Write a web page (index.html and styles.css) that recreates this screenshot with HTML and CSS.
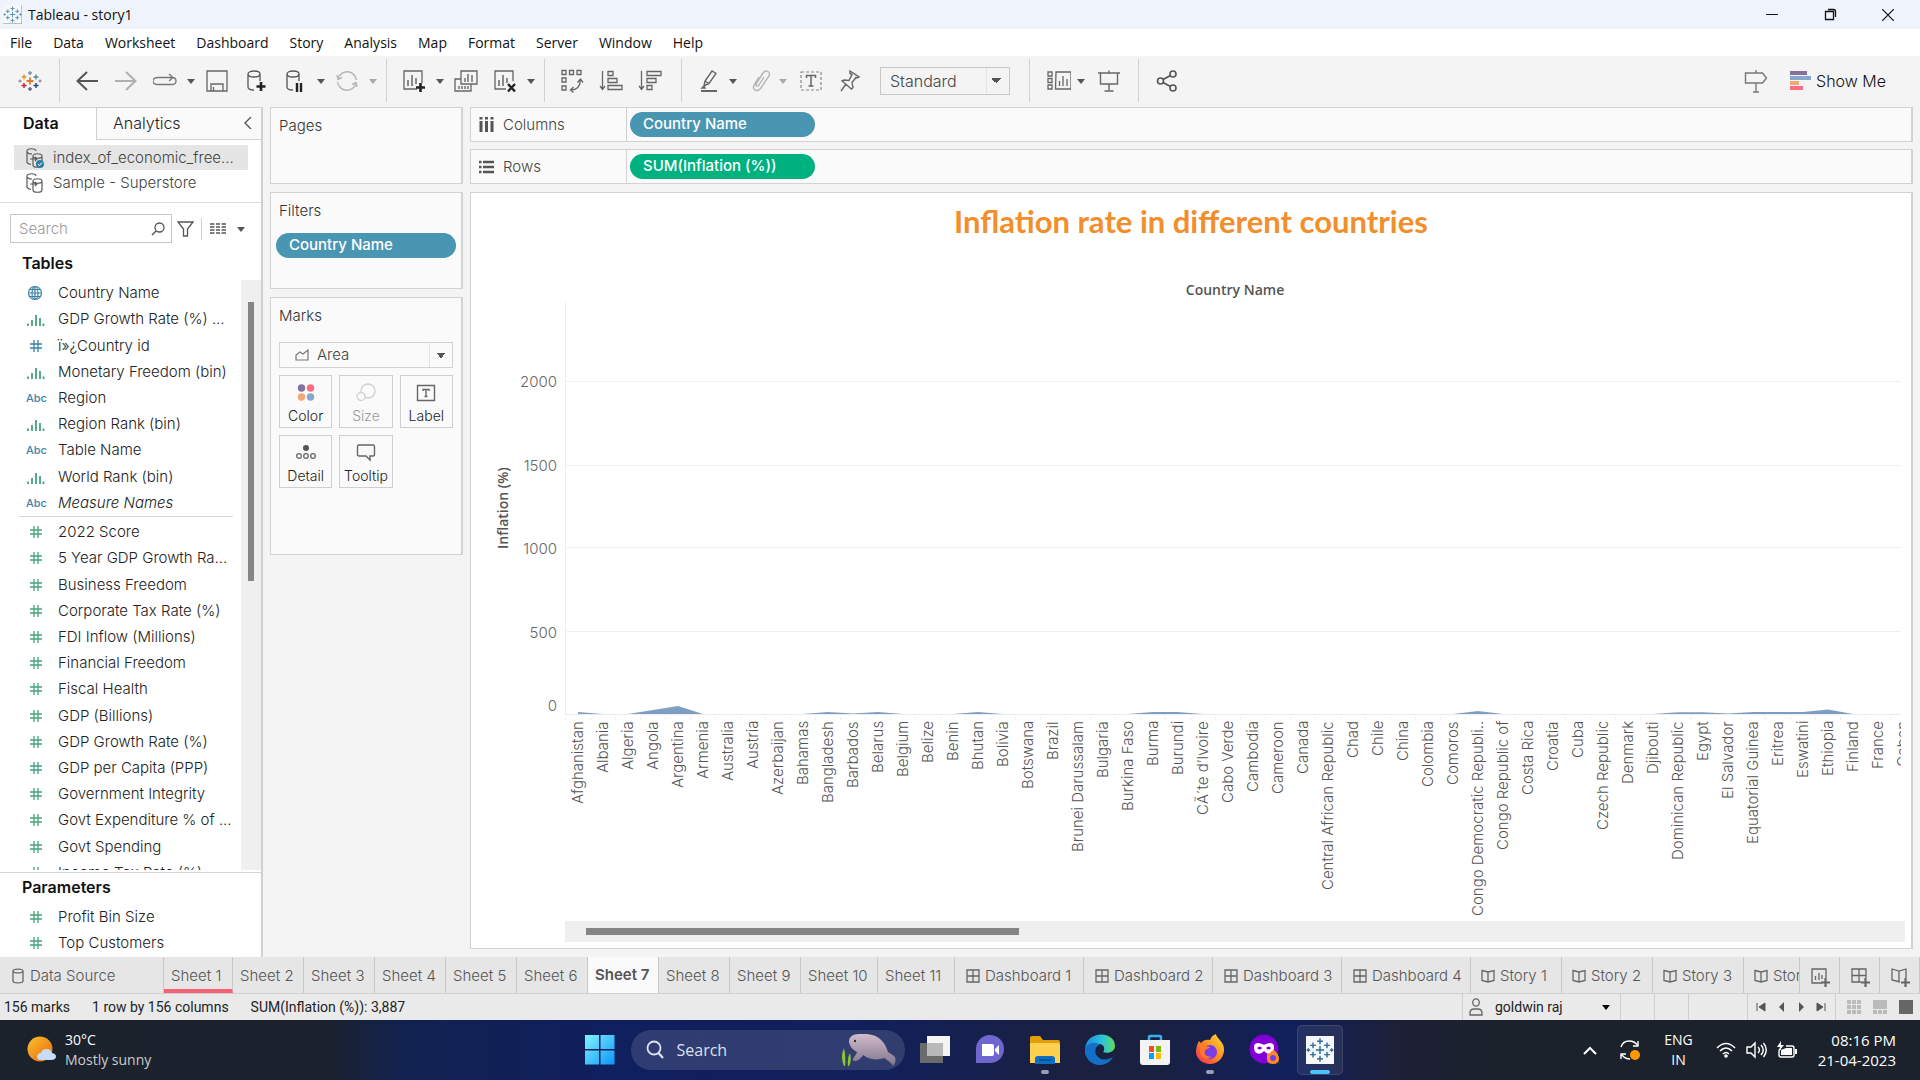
FILE: index.html
```html
<!DOCTYPE html>
<html lang="en">
<head>
<meta charset="utf-8">
<title>Tableau - story1</title>
<link rel="stylesheet" href="styles.css">
</head>
<body>
<svg class="sprite" aria-hidden="true">
  <symbol id="caret" viewBox="0 0 10 6"><path d="M1 1h8L5 6z" fill="currentColor"/></symbol>
  <symbol id="hash" viewBox="0 0 14 14"><path d="M5 1v12M9 1v12M1 5h12M1 9h12" stroke="currentColor" stroke-width="1.3" fill="none"/></symbol>
  <symbol id="bins" viewBox="0 0 18 12"><path d="M1 9.500v2.500M5 6v6M9 1v11M13 4v8M16.500 9.500v2.500" stroke="currentColor" stroke-width="1.800" fill="none"/></symbol>
  <symbol id="globe" viewBox="0 0 16 16"><g fill="none" stroke="currentColor" stroke-width="1.200"><circle cx="8" cy="8" r="6.500"/><ellipse cx="8" cy="8" rx="3" ry="6.500"/><path d="M8 1v14M1.500 8h13M2.500 4.500h11M2.500 11.500h11"/></g></symbol>
  <symbol id="db" viewBox="0 0 24 24"><path d="M4 5v13c0 2 3 3 6 3M16 5v7M4 5c0-4 12-4 12 0s-12 4-12 0z" fill="none" stroke="currentColor" stroke-width="1.300"/></symbol>
  <symbol id="source" viewBox="0 0 20 20"><g fill="none" stroke="#5a5a5a" stroke-width="1.200"><path d="M2 3v11c0 1.500 2 2 4 2.500M2 3c0-3 9-3 9 0M2 4c1 2 4 2 5 2"/><path d="M8 8v9c0 3 9 3 9 0V8c0-3-9-3-9 0c0 3 9 3 9 0" /><path d="M5 11h7M10 9l2 2-2 2"/></g></symbol>
  <symbol id="dash" viewBox="0 0 14 14"><path d="M1 1h12v12H1zM7 1v12M1 7h12" fill="none" stroke="#666" stroke-width="1.300"/></symbol>
  <symbol id="story" viewBox="0 0 14 14"><path d="M1 1.500l6 1.500 6-1.500v10L7 13l-6-1.500zM7 3v10" fill="none" stroke="#666" stroke-width="1.300"/></symbol>
  <symbol id="plus" viewBox="0 0 10 10"><path d="M5 0v10M0 5h10" stroke="currentColor" stroke-width="2.400"/></symbol>
  <symbol id="sparkle" viewBox="0 0 24 24"><path d="M12 8.500v7M8.500 12h7M12 2v5M9.500 4.500h5M12 17v5M9.500 19.500h5M6 5.500v5M3.500 8h5M18 5.500v5M15.500 8h5M6 13.500v5M3.500 16h5M18 13.500v5M15.500 16h5M2 10.500v3M.5 12h3M22 10.500v3M20.500 12h3" fill="none"/></symbol>
</svg>

<header class="titlebar">
  <svg class="appicon" viewBox="0 0 24 24"><rect width="24" height="24" fill="#f7f7f7"/><path d="M0 23.500h24M23.500 0v24" stroke="#aaa"/><use href="#sparkle" stroke="#4f93b5" stroke-width="1.200"/></svg>
  <h1>Tableau - story1</h1>
  <div class="winctl">
    <button aria-label="Minimize"><svg width="12" height="12"><path d="M0 5.500h12" stroke="#111"/></svg></button>
    <button aria-label="Restore"><svg width="13" height="13"><path d="M1.500 3.500h8v8h-8zM4 1.500h5.500q2 0 2 2V9" fill="none" stroke="#111" stroke-width="1.300"/></svg></button>
    <button aria-label="Close"><svg width="12" height="12"><path d="M0 0l12 12M12 0L0 12" stroke="#111" stroke-width="1.200"/></svg></button>
  </div>
</header>

<nav class="menu">
  <a href="#">File</a><a href="#">Data</a><a href="#">Worksheet</a><a href="#">Dashboard</a><a href="#">Story</a><a href="#">Analysis</a><a href="#">Map</a><a href="#">Format</a><a href="#">Server</a><a href="#">Window</a><a href="#">Help</a>
</nav>

<div class="toolbar">
  <div class="group home"><button class="tool" aria-label="Start page"><svg viewBox="0 0 24 24" fill="none" stroke-width="1.400"><path d="M12 8.500v7M8.500 12h7" stroke="#e8762c" stroke-width="1.800"/><path d="M12 2v4M10 4h4" stroke="#7199a6"/><path d="M12 18v4M10 20h4" stroke="#5c6692"/><path d="M6 5.500v5M3.500 8h5" stroke="#eb912c"/><path d="M18 5.500v5M15.500 8h5" stroke="#59879b"/><path d="M6 14v5M3.500 16.500h5" stroke="#c72035"/><path d="M18 14v5M15.500 16.500h5" stroke="#1f457e"/><path d="M2 10.500v3M.5 12h3M22 10.500v3M20.500 12h3" stroke="#9a8aa0"/></svg></button></div>
  <div class="group">
    <button class="tool" aria-label="Undo"><svg viewBox="0 0 24 24"><path d="M23 12H3M12 3l-9.500 9L12 21" fill="none" stroke="#555" stroke-width="2"/></svg></button>
    <button class="tool" aria-label="Redo"><svg viewBox="0 0 24 24"><path d="M1 12h20M12 3l9.500 9L12 21" fill="none" stroke="#b0b0b0" stroke-width="2"/></svg></button>
    <button class="tool" aria-label="Replay"><svg viewBox="0 0 24 24"><path d="M19 8.500q4 0 4 3.500t-4 3.500H5Q0 15.500 0 12t5-3.500h14M16 5l4 3.500-4 3.500" fill="none" stroke="#777" stroke-width="1.300"/></svg></button>
    <button class="drop" aria-label="Replay options"><svg><use href="#caret"/></svg></button>
    <button class="tool" aria-label="Save"><svg viewBox="0 0 24 24"><path d="M2 2h20v20H2zM6 22v-7h12v7M8.500 18v4" fill="none" stroke="#666" stroke-width="1.300"/></svg></button>
    <button class="tool" aria-label="New data source"><svg viewBox="0 0 24 24"><use href="#db"/><path d="M17 13v9M12.500 17.500h9" stroke="#222" stroke-width="2.600"/></svg></button>
    <button class="tool" aria-label="Pause auto updates"><svg viewBox="0 0 24 24"><use href="#db"/><path d="M14 14v9M18 14v9" stroke="#222" stroke-width="2.400"/></svg></button>
    <button class="drop" aria-label="Update options"><svg><use href="#caret"/></svg></button>
    <button class="tool" aria-label="Refresh"><svg viewBox="0 0 24 24"><path d="M21.500 11A9.500 9.500 0 0 0 3 9.500M2.500 13A9.500 9.500 0 0 0 21 14.500M2 6l1 4.500 4-2M22 18l-1-4.500-4 2" fill="none" stroke="#b5b5b5" stroke-width="1.400"/></svg></button>
    <button class="drop off" aria-label="Refresh options"><svg><use href="#caret"/></svg></button>
  </div>
  <div class="group">
    <button class="tool" aria-label="New worksheet"><svg viewBox="0 0 24 24"><path d="M15 20H2V2h18v12" fill="none" stroke="#666" stroke-width="1.300"/><path d="M6 11v6M10 6v11M14 9v6" stroke="#666" stroke-width="1.500"/><path d="M18.500 14v9M14 18.500h9" stroke="#222" stroke-width="2.600"/></svg></button>
    <button class="drop" aria-label="New worksheet options"><svg><use href="#caret"/></svg></button>
    <button class="tool" aria-label="Duplicate"><svg viewBox="0 0 24 24"><path d="M7 2h16v13H7zM7 10H1v12h16v-7" fill="none" stroke="#666" stroke-width="1.300"/><path d="M11 9v4M14 5v8M18 6v7M5 17v3M8 17v3M11 17v3M14 17v3" stroke="#666" stroke-width="1.400"/></svg></button>
    <button class="tool" aria-label="Clear sheet"><svg viewBox="0 0 24 24"><path d="M13 20H2V2h18v10" fill="none" stroke="#666" stroke-width="1.300"/><path d="M6 11v6M10 6v11M14 9v5" stroke="#666" stroke-width="1.500"/><path d="M15 15l7 7.500M22 15l-7 7.500" stroke="#222" stroke-width="2.400"/></svg></button>
    <button class="drop" aria-label="Clear options"><svg><use href="#caret"/></svg></button>
  </div>
  <div class="group">
    <button class="tool" aria-label="Swap rows and columns"><svg viewBox="0 0 24 24" fill="none" stroke="#666" stroke-width="1.300"><path d="M2 1.500h4v4H2zM9.500 1.500h4v4h-4zM17 1.500h4v4h-4zM2 9h4v4H2zM2 17h4v4H2zM11 21c6 0 9-3 9.500-10M17.500 13.500l3-3.500 2.500 3.500M13.500 18l-3 3 3 2.500"/></svg></button>
    <button class="tool" aria-label="Sort ascending"><svg viewBox="0 0 24 24" fill="none" stroke="#666" stroke-width="1.300"><path d="M3.500 2v18M1 17l2.500 3.500L6 17M9 2.500h5v4H9zM9 9.500h9v4H9zM9 16.500h14v4H9z"/></svg></button>
    <button class="tool" aria-label="Sort descending"><svg viewBox="0 0 24 24" fill="none" stroke="#666" stroke-width="1.300"><path d="M3.500 2v18M1 17l2.500 3.500L6 17M9 2.500h14v4H9zM9 9.500h9v4H9zM9 16.500h5v4H9z"/></svg></button>
  </div>
  <div class="group marks-tools">
    <button class="tool" aria-label="Highlight"><svg viewBox="0 0 24 24" fill="none" stroke="#666" stroke-width="1.400"><path d="M5 17l1-5 7-10 4 2.500-7 10zM6 12l4 2.500M5 17l-2 2h3z"/><path d="M2 22h16" stroke-width="2"/></svg></button>
    <button class="drop" aria-label="Highlight options"><svg><use href="#caret"/></svg></button>
    <button class="tool" aria-label="Group members"><svg viewBox="0 0 24 24" fill="none" stroke="#b5b5b5" stroke-width="1.400"><path d="M15 8l-5 8c-1 2-4 1-3-1l7-11c3-4 8-1 6 3l-8 12c-4 5-9 2-7-3l5-8"/></svg></button>
    <button class="drop off" aria-label="Group options"><svg><use href="#caret"/></svg></button>
    <button class="tool" aria-label="Show mark labels"><svg viewBox="0 0 24 24" fill="none" stroke="#888"><path d="M2 3h20v18H2z" stroke-dasharray="3 2" stroke-width="1.200"/><path d="M7.500 9V6.500h9V9M12 6.500v10M9.500 17h5" stroke="#666" stroke-width="1.500"/></svg></button>
    <button class="tool" aria-label="Pin"><svg viewBox="0 0 24 24" fill="none" stroke="#666" stroke-width="1.400"><path d="M12 2l9 6-2 1-1-.5-4 5 1 5-1.500 1.500L4 12l2-1 5 .5 3-6-2-1zM8 15l-5 7"/></svg></button>
    <select class="fit" aria-label="Fit"><option>Standard</option></select>
  </div>
  <div class="group marks-tools">
    <button class="tool" aria-label="Show cards"><svg viewBox="0 0 24 24" fill="none" stroke="#666" stroke-width="1.300"><path d="M9 3h15v17H8.500zM1 3h4v4H1zM1 9.500h4v4H1zM1 16h4v4H1zM12.500 12v5M16 7v10M20 10v7"/></svg></button>
    <button class="drop" aria-label="Card options"><svg><use href="#caret"/></svg></button>
    <button class="tool" aria-label="Presentation mode"><svg viewBox="0 0 24 24" fill="none" stroke="#666" stroke-width="1.400"><path d="M1 4h22M3.500 4v11h17V4M12 1.500V4M12 15v7M7.500 22h9"/></svg></button>
  </div>
  <div class="group last"><button class="tool" aria-label="Share"><svg viewBox="0 0 24 24" fill="none" stroke="#555" stroke-width="1.600"><circle cx="5.500" cy="12" r="3"/><circle cx="18" cy="5" r="3"/><circle cx="18" cy="19" r="3"/><path d="M8 10.500l7.500-4M8 13.500l7.500 4"/></svg></button></div>
  <div class="tbright">
    <button class="tool" aria-label="Guide"><svg viewBox="0 0 24 24" fill="none" stroke="#777" stroke-width="1.400"><path d="M1.500 4h17l4 5-4 5h-17zM12 1v3M12 14v9M9 23h6"/></svg></button>
    <button class="showme"><svg width="22" height="20"><path fill="#86719c" d="M0 0h17v4H0z"/><path fill="#86a8cf" d="M0 5h21v4H0z"/><path fill="#f3a679" d="M0 10h9v4H0z"/><path fill="#fb6c80" d="M0 15h13v4H0z"/></svg>Show Me</button>
  </div>
</div>

<main class="work">
  <aside class="pane">
    <div class="ptabs"><button class="on">Data</button><button>Analytics<svg width="8" height="12"><path d="M7 0L1 6l6 6" fill="none" stroke="#555" stroke-width="1.400"/></svg></button></div>
    <ul class="sources">
      <li class="sel"><svg viewBox="0 0 20 20"><use href="#source"/><circle cx="15" cy="16" r="4" fill="#2e7fa5"/><path d="M13 16l1.500 1.500L17 14.500" fill="none" stroke="#fff"/></svg>index_of_economic_free...</li>
      <li><svg viewBox="0 0 20 20"><use href="#source"/></svg>Sample - Superstore</li>
    </ul>
    <div class="find">
      <label class="search"><input type="text" placeholder="Search" aria-label="Search fields"><svg width="14" height="14"><circle cx="8.500" cy="5.500" r="4.500" fill="none" stroke="#555" stroke-width="1.300"/><path d="M5 9L1 13" stroke="#555" stroke-width="1.500"/></svg></label>
      <button aria-label="Filter fields"><svg width="17" height="16"><path d="M1 1h15l-5.500 7v7h-4V8z" fill="none" stroke="#555" stroke-width="1.300"/></svg></button>
      <button class="view" aria-label="View"><svg width="16" height="14"><path d="M0 2h4.500M6 2h4M11.500 2H16M0 5h4.500M6 5h4M11.500 5H16M0 8h4.500M6 8h4M11.500 8H16M0 11h4.500M6 11h4M11.500 11H16" stroke="#555" stroke-width="1.600"/></svg></button>
      <button aria-label="View options"><svg width="10" height="6"><use href="#caret"/></svg></button>
    </div>
    <h2>Tables</h2>
    <div class="scroller">
      <div class="lists">
        <ul class="fields dims">
          <li class="dim"><svg class="globe"><use href="#globe"/></svg>Country Name</li>
          <li><svg class="bins"><use href="#bins"/></svg>GDP Growth Rate (%) ...</li>
          <li class="dim"><svg><use href="#hash"/></svg>ï»¿Country id</li>
          <li><svg class="bins"><use href="#bins"/></svg>Monetary Freedom (bin)</li>
          <li class="dim"><b>Abc</b>Region</li>
          <li><svg class="bins"><use href="#bins"/></svg>Region Rank (bin)</li>
          <li class="dim"><b>Abc</b>Table Name</li>
          <li><svg class="bins"><use href="#bins"/></svg>World Rank (bin)</li>
          <li class="dim"><b>Abc</b><i>Measure Names</i></li>
        </ul>
        <ul class="fields measures">
          <li><svg><use href="#hash"/></svg>2022 Score</li>
          <li><svg><use href="#hash"/></svg>5 Year GDP Growth Ra...</li>
          <li><svg><use href="#hash"/></svg>Business Freedom</li>
          <li><svg><use href="#hash"/></svg>Corporate Tax Rate (%)</li>
          <li><svg><use href="#hash"/></svg>FDI Inflow (Millions)</li>
          <li><svg><use href="#hash"/></svg>Financial Freedom</li>
          <li><svg><use href="#hash"/></svg>Fiscal Health</li>
          <li><svg><use href="#hash"/></svg>GDP (Billions)</li>
          <li><svg><use href="#hash"/></svg>GDP Growth Rate (%)</li>
          <li><svg><use href="#hash"/></svg>GDP per Capita (PPP)</li>
          <li><svg><use href="#hash"/></svg>Government Integrity</li>
          <li><svg><use href="#hash"/></svg>Govt Expenditure % of ...</li>
          <li><svg><use href="#hash"/></svg>Govt Spending</li>
          <li><svg><use href="#hash"/></svg>Income Tax Rate (%)</li>
        </ul>
      </div>
      <div class="vtrack"><div class="vthumb"></div></div>
    </div>
    <section class="params">
      <h2>Parameters</h2>
      <ul class="fields">
        <li><svg><use href="#hash"/></svg>Profit Bin Size</li>
        <li><svg><use href="#hash"/></svg>Top Customers</li>
      </ul>
    </section>
  </aside>

  <div class="cards">
    <section class="card pages"><h3>Pages</h3></section>
    <section class="card filters"><h3>Filters</h3><button class="pill blue">Country Name</button></section>
    <section class="card marks"><h3>Marks</h3>
      <div class="marktype"><svg width="14" height="12"><path d="M1 11V6l4-3 3 2 5-4v10z" fill="none" stroke="#777" stroke-width="1.200"/></svg><select aria-label="Mark type"><option>Area</option></select></div>
      <div class="markgrid">
        <button><svg viewBox="0 0 20 20"><circle cx="5.500" cy="5" r="3.700" fill="#86719c"/><circle cx="14.500" cy="5" r="3.700" fill="#fb6c80"/><circle cx="5.500" cy="14" r="3.700" fill="#f3a679"/><circle cx="14.500" cy="14" r="3.700" fill="#86a8cf"/></svg>Color</button>
        <button disabled><svg viewBox="0 0 20 20" fill="none" stroke="#d0d0d0" stroke-width="1.300"><circle cx="12" cy="8" r="7"/><circle cx="5" cy="13.500" r="4" fill="#fafafa"/></svg>Size</button>
        <button><svg viewBox="0 0 20 20" fill="none" stroke="#666" stroke-width="1.400"><path d="M1.500 2.500h17v15h-17zM7 8V6.500h6V8M10 6.500V13M8.500 13.500h3"/></svg>Label</button>
        <button><svg viewBox="0 0 20 20" fill="none" stroke="#666" stroke-width="1.300"><circle cx="10" cy="5" r="3" fill="#555" stroke="none"/><circle cx="3" cy="13" r="2.300"/><circle cx="10" cy="13" r="2.300"/><circle cx="17" cy="13" r="2.300"/></svg>Detail</button>
        <button><svg viewBox="0 0 20 20" fill="none" stroke="#666" stroke-width="1.400"><path d="M3 2h14q1.500 0 1.500 1.500v8q0 1.500-1.500 1.500h-3v4l-4-4H3q-1.500 0-1.500-1.500v-8Q1.500 2 3 2z"/></svg>Tooltip</button>
      </div>
    </section>
  </div>

  <div class="stage">
    <div class="shelf"><span class="lab"><svg width="15" height="15"><path d="M2 4v11M7.500 4v11M13 4v11M2 0v2.500M7.500 0v2.500M13 0v2.500" stroke="#555" stroke-width="3"/></svg>Columns</span><button class="pill blue">Country Name</button></div>
    <div class="shelf"><span class="lab"><svg width="15" height="14"><path d="M4 2h11M4 7h11M4 12h11M0 2h2.500M0 7h2.500M0 12h2.500" stroke="#555" stroke-width="2.400"/></svg>Rows</span><button class="pill green">SUM(Inflation (%))</button></div>
    <section class="viz">
      <h2>Inflation rate in different countries</h2>
      <div class="chart">
        <div class="colhead">Country Name</div>
        <div class="ytitle">Inflation (%)</div>
        <div class="ticks"><span></span><span>2000</span><span>1500</span><span>1000</span><span>500</span><span>0</span></div>
        <div class="plot"><div></div><div></div><div></div><div></div><div></div>
          <svg class="area" width="1400" height="10"><path d="M12 10V8L37 10H62L87 6 112 2 137 10H237L262 8 287 9.500 312 8 337 10H387L412 8 437 10H562L587 8H612L637 10H887L912 7 937 10H1087L1112 8.300H1137L1162 9.500 1187 8H1237L1262 5.500 1287 10z" fill="#7f9fc2"/></svg>
        </div>
        <div class="names"><span>Afghanistan</span><span>Albania</span><span>Algeria</span><span>Angola</span><span>Argentina</span><span>Armenia</span><span>Australia</span><span>Austria</span><span>Azerbaijan</span><span>Bahamas</span><span>Bangladesh</span><span>Barbados</span><span>Belarus</span><span>Belgium</span><span>Belize</span><span>Benin</span><span>Bhutan</span><span>Bolivia</span><span>Botswana</span><span>Brazil</span><span>Brunei Darussalam</span><span>Bulgaria</span><span>Burkina Faso</span><span>Burma</span><span>Burundi</span><span>CÃ´te d’Ivoire</span><span>Cabo Verde</span><span>Cambodia</span><span>Cameroon</span><span>Canada</span><span>Central African Republic</span><span>Chad</span><span>Chile</span><span>China</span><span>Colombia</span><span>Comoros</span><span>Congo Democratic Republi..</span><span>Congo Republic of</span><span>Costa Rica</span><span>Croatia</span><span>Cuba</span><span>Czech Republic</span><span>Denmark</span><span>Djibouti</span><span>Dominican Republic</span><span>Egypt</span><span>El Salvador</span><span>Equatorial Guinea</span><span>Eritrea</span><span>Eswatini</span><span>Ethiopia</span><span>Finland</span><span>France</span><span>Gabon</span></div>
        <div class="htrack"><div class="hthumb"></div></div>
      </div>
    </section>
  </div>
</main>

<nav class="sheets">
  <button class="src"><svg viewBox="0 0 14 16"><path d="M2 3v10c0 2.500 10 2.500 10 0V3M2 3c0-2.500 10-2.500 10 0s-10 2.500-10 0z" fill="none" stroke="#666" stroke-width="1.300"/></svg>Data Source</button>
  <button class="red">Sheet 1</button><button>Sheet 2</button><button>Sheet 3</button><button>Sheet 4</button><button>Sheet 5</button><button>Sheet 6</button><button class="cur">Sheet 7</button><button>Sheet 8</button><button>Sheet 9</button><button class="w2">Sheet 10</button><button class="w2">Sheet 11</button>
  <button class="dash"><svg><use href="#dash"/></svg>Dashboard 1</button><button class="dash"><svg><use href="#dash"/></svg>Dashboard 2</button><button class="dash"><svg><use href="#dash"/></svg>Dashboard 3</button><button class="dash"><svg><use href="#dash"/></svg>Dashboard 4</button>
  <button class="story"><svg><use href="#story"/></svg>Story 1</button><button class="story"><svg><use href="#story"/></svg>Story 2</button><button class="story"><svg><use href="#story"/></svg>Story 3</button><button class="story cut"><svg><use href="#story"/></svg>Story 4</button>
  <button class="add" aria-label="New worksheet"><svg viewBox="0 0 20 20" color="#666"><path d="M11 15H1V1h14v9" fill="none" stroke="#666" stroke-width="1.300"/><path d="M4.500 8v4M8 5v7M11 7v4" stroke="#666" stroke-width="1.300"/><use href="#plus" x="10" y="10" width="9" height="9"/></svg></button>
  <button class="add" aria-label="New dashboard"><svg viewBox="0 0 20 20" color="#666"><path d="M10 14H1V1h14v9M8 1v13M1 7.500h14" fill="none" stroke="#666" stroke-width="1.300"/><use href="#plus" x="10" y="10" width="9" height="9"/></svg></button>
  <button class="add" aria-label="New story"><svg viewBox="0 0 20 20" color="#666"><path d="M9 14l-8-2V1l7 2 7-2v9M8 3v11" fill="none" stroke="#666" stroke-width="1.300"/><use href="#plus" x="10" y="10" width="9" height="9"/></svg></button>
</nav>

<footer class="status">
  <span>156 marks</span><span>1 row by 156 columns</span><span>SUM(Inflation (%)): 3,887</span>
  <div class="user"><svg width="14" height="18" fill="none" stroke="#666" stroke-width="1.300"><ellipse cx="7" cy="4.500" rx="3.300" ry="3.700"/><path d="M1 17v-2q0-4 4-4h4q4 0 4 4v2z"/></svg><span>goldwin raj</span><svg width="10" height="6" color="#000"><use href="#caret"/></svg></div>
  <div class="blank"></div><div class="blank"></div><div class="blank wide"></div>
  <div class="nav">
    <button aria-label="First"><svg width="10" height="10"><path d="M1 1v8M9 1v8L3 5z" fill="#555" stroke="#555"/></svg></button><button aria-label="Previous"><svg width="10" height="10"><path d="M8 0v10L3 5z" fill="#555"/></svg></button><button aria-label="Next"><svg width="10" height="10"><path d="M3 0v10l5-5z" fill="#555"/></svg></button><button aria-label="Last"><svg width="10" height="10"><path d="M9 1v8M1 1v8l6-4z" fill="#555" stroke="#555"/></svg></button>
  </div>
  <div class="modes">
    <button aria-label="Sheet sorter"><svg width="14" height="14"><path d="M0 2h14M0 7h14M0 12h14" stroke="#bbb" stroke-width="4" stroke-dasharray="4 1"/></svg></button><button aria-label="Filmstrip"><svg width="14" height="14"><path d="M0 0h14v9H0z" fill="#bbb"/><path d="M0 12h14" stroke="#bbb" stroke-width="4" stroke-dasharray="4 1"/></svg></button><button aria-label="Tabs"><svg width="14" height="14"><path d="M0 0h14v14H0z" fill="#666"/></svg></button>
  </div>
</footer>

<div class="taskbar">
  <div class="weather"><svg width="30" height="30"><defs><linearGradient id="sun" x1="0" y1="0" x2="1" y2="1"><stop stop-color="#f5c22f"/><stop offset="1" stop-color="#f0640e"/></linearGradient></defs><circle cx="13" cy="14" r="12.500" fill="url(#sun)"/><path d="M14 25q-4 0-4-3.500t4-3.500q1-4 5.500-4t5.500 4q4 .5 4 3.500t-4 3.500z" fill="#c5dcfa"/></svg><p>30°C<br><span>Mostly sunny</span></p></div>
  <div class="apps">
    <button class="start" aria-label="Start"><svg width="30" height="30"><defs><linearGradient id="win" x1="0" y1="0" x2="1" y2="1"><stop stop-color="#82f3fd"/><stop offset="1" stop-color="#0a95fb"/></linearGradient></defs><path d="M0 0h14v14H0zM15.500 0h14v14h-14zM0 15.500h14v14H0zM15.500 15.500h14v14h-14z" fill="url(#win)"/></svg></button>
    <label class="tsearch"><svg width="18" height="20"><circle cx="8" cy="8" r="6.500" fill="none" stroke="#dfe3f0" stroke-width="1.800"/><path d="M12.500 13l4.500 5" stroke="#dfe3f0" stroke-width="2.200"/></svg><input type="text" placeholder="Search" aria-label="Search Windows">
      <svg width="56" height="34" viewBox="0 0 56 34"><defs><linearGradient id="sea" x1="0" y1="0" x2="0" y2="1"><stop stop-color="#d2bccb"/><stop offset="1" stop-color="#80748b"/></linearGradient></defs><path d="M3 33Q-1 24 3 15q2 8 1 18M7 33q-1-8 2-13 2 8-1 13" fill="#8cc832"/><path d="M8 9Q8 1 18 1h8c12 1 18 8 21 18l6 4c3 3 1 8-1 10-2-4-5-5-9-8-8 3-16 1-21-3-2 4-8 8-10 5-1-2 3-4 4-8-4-2-7-5-8-10z" fill="url(#sea)"/><circle cx="14" cy="8" r="1.200" fill="#333"/></svg></label>
    <button aria-label="Task view"><svg width="30" height="30"><path d="M0 8h23v20H0z" fill="#6b6b6b"/><path d="M7 1h23v20H7z" fill="#f4f4f4"/><path d="M7 8h16v13H7z" fill="#b9b9b9"/></svg></button>
    <button aria-label="Chat"><svg width="30" height="30"><path d="M1 28V14A14 14 0 1 1 15 28z" fill="#6f66cf"/><path d="M7 9h10q2 0 2 2v8q0 2-2 2H7zM20 14l4-4v10l-4-4z" fill="#fff"/></svg></button>
    <button class="run" aria-label="File Explorer"><svg width="32" height="30"><path d="M1 3q0-2 2-2h8l3 4h15q2 0 2 2v6H1z" fill="#e0a00c"/><path d="M1 8h28q2 0 2 2v18H1z" fill="#fdd04f"/><path d="M6 29v-5q0-3 3-3h14q3 0 3 3v5z" fill="#0b6fc4"/><path d="M10 25h12" stroke="#0a4f98" stroke-width="2"/></svg></button>
    <button aria-label="Edge"><svg width="32" height="32"><defs><linearGradient id="edge" x1="0" y1="0" x2="1" y2="0"><stop stop-color="#1b8de0"/><stop offset=".6" stop-color="#2fc4d8"/><stop offset="1" stop-color="#62dc58"/></linearGradient></defs><path d="M1 16C1-4 31-4 31 12c0 6-7 8-12 6 2-2 2-8-4-8C6 10 1 16 1 24z" fill="url(#edge)"/><path d="M1 14c3-5 10-7 15-3-5 1-6 7-3 11 4 5 11 4 16 1-3 6-9 8-13 8C6 31 0 23 1 14z" fill="#1470c6"/></svg></button>
    <button aria-label="Store"><svg width="30" height="32"><path d="M9 7V3q0-1 1-1h10q1 0 1 1v4" fill="none" stroke="#35b3f0" stroke-width="2.500"/><path d="M0 6h30v22q0 3-3 3H3q-3 0-3-3z" fill="#f3f3f3"/><path d="M9 12h5v6H9z" fill="#f25022"/><path d="M16 12h5v6h-5z" fill="#7fba00"/><path d="M9 19h5v6H9z" fill="#00a4ef"/><path d="M16 19h5v6h-5z" fill="#ffb900"/></svg></button>
    <button class="run" aria-label="Firefox"><svg width="30" height="32"><defs><linearGradient id="fox" x1="1" y1="0" x2="0" y2="1"><stop stop-color="#ffe23e"/><stop offset=".5" stop-color="#ff8a1e"/><stop offset="1" stop-color="#f0245e"/></linearGradient></defs><path d="M4 7l2 2c2-3 6-4 9-3 1-3 3-5 6-6 0 4 9 8 8 17-1 8-7 13-14 13S1 25 1 18c0-4 1-8 3-11z" fill="url(#fox)"/><circle cx="15" cy="18" r="7" fill="#7a3ce8"/><path d="M4 9c5 0 6 4 11 4 0 2-4 1-5 4-2 4 4 7 7 5-4 5-12 2-12-5z" fill="#ff7a2a"/></svg></button>
    <button aria-label="Firefox private"><svg width="32" height="32"><circle cx="15" cy="15" r="14.500" fill="#8000d7"/><path d="M5 13c0-6 7-4 10-2 3-2 10-4 10 2 0 8-7 8-10 4-3 4-10 4-10-4z" fill="#fff"/><path d="M8 14q3-3 5 0-2 3-5 0zM17 14q3-3 5 0-2 3-5 0z" fill="#8000d7"/><path d="M18 19q1 2 3 0 2-3 4-3 5 4 5 9t-6 5-6-5z" fill="#ff8a1e"/><circle cx="24" cy="24" r="3" fill="#7a3ce8"/></svg></button>
    <button class="active" aria-label="Tableau"><svg width="28" height="28" viewBox="0 0 24 24"><rect width="24" height="24" fill="#f5f7fa"/><use href="#sparkle" stroke="#2c6d96" stroke-width="1.200"/></svg></button>
  </div>
  <div class="tray">
    <svg width="14" height="9"><path d="M1 8l6-6 6 6" fill="none" stroke="#fff" stroke-width="2"/></svg>
    <svg class="sync" width="22" height="22"><path d="M2 8q2-6 8-6 6 0 9 5M19 2v5h-5M2 20v-5h5M3 16q3 4 8 4" fill="none" stroke="#fff" stroke-width="1.400"/><circle cx="16" cy="16" r="5" fill="#ff9800"/></svg>
    <p class="lang">ENG<br>IN</p>
    <svg width="20" height="16" fill="none" stroke="#fff" stroke-width="1.600"><path d="M1 6q9-9 18 0M4 9q6-6 12 0M7 12q3-3 6 0"/><circle cx="10" cy="14" r="1" fill="#fff"/></svg>
    <svg width="21" height="18" fill="none" stroke="#fff" stroke-width="1.400"><path d="M1 6h4l4-4v14l-4-4H1zM12 6q3 3 0 6M15 4q4.500 5 0 10M17.500 2q5.500 7 0 14"/></svg>
    <svg width="21" height="18"><path d="M4 8q-2 0-2 2v4q0 2 2 2h11q2 0 2-2V7q0-2-2-2H9" fill="none" stroke="#fff" stroke-width="1.400"/><path d="M4 14V9l5-2h6v7zM18 8h2v5h-2zM4 0L0 6h3L2 10l5-6H4z" fill="#fff"/></svg>
    <p class="clock">08:16 PM<br>21-04-2023</p>
  </div>
</div>
</body>
</html>
```
FILE: styles.css
```css
* { box-sizing: border-box; margin: 0; padding: 0; }
ul { list-style: none; }
button, input, select { font: inherit; color: inherit; background: none; border: 0; }
svg { flex: none; display: block; }
body {
  min-height: 100vh;
  display: flex;
  flex-direction: column;
  font: 300 15px/20px Inter, "Liberation Sans", sans-serif;
  color: #222;
  background: #f4f4f4;
  overflow: hidden;
}
.sprite { position: absolute; width: 0; height: 0; }

.titlebar { display: flex; align-items: center; height: 29px; padding-left: 3px; background: #eff3fb; color: #111; }
.titlebar h1 { font: 400 14px/20px "Open Sans", sans-serif; margin-left: 6px; }
.appicon { width: 19px; height: 19px; }
.winctl { margin-left: auto; display: flex; padding-right: 3px; }
.winctl button { width: 58px; height: 29px; display: grid; place-items: center; }

.menu { display: flex; gap: 21px; height: 27px; align-items: center; padding-left: 10px; background: #fff; font: 400 14px/20px "Open Sans", sans-serif; }
.menu a { color: #111; text-decoration: none; }

.toolbar { display: flex; height: 51px; align-items: center; padding-bottom: 2px; color: #555; }
.group { display: flex; align-items: center; height: 43px; padding: 0 8px 0 15px; border-right: 1px solid #d2d2d2; }
.group.home { padding: 0 17px 0 18px; }
.group.last { border: 0; padding-left: 16px; }
.tool { width: 24px; height: 24px; }
.tool svg { width: 24px; height: 24px; }
.tool + .tool { margin-left: 15px; }
.drop { width: 10px; margin: 0 9px; }
.drop svg { width: 10px; height: 6px; }
.drop.off { color: #aaa; }
.drop:last-child { margin-right: 0; }
.group:nth-child(4) { padding-right: 19px; }
.group.marks-tools { padding: 0 17px 0 17px; }
.marks-tools .drop { margin: 0 11px 0 5px; }
.fit {
  width: 130px; height: 28px; margin: 0 2px 0 18px; padding: 0 9px; border: 1px solid #c8c8c8; color: #444; font-size: 16px; appearance: none;
  background: linear-gradient(45deg, transparent 50%, #555 50%) right 13px center / 5px 5px no-repeat, linear-gradient(315deg, transparent 50%, #555 50%) right 8px center / 5px 5px no-repeat, linear-gradient(#e2e2e2, #e2e2e2) right 22px center / 1px 100% no-repeat;
}
.tbright { margin-left: auto; display: flex; align-items: center; gap: 22px; padding-right: 34px; }
.showme { display: flex; align-items: center; gap: 4px; font-size: 16px; color: #111; }

.work { flex: 1; display: flex; padding-right: 7px; gap: 7px; min-height: 850px; }
.pane { width: 263px; flex: none; display: flex; flex-direction: column; background: #fff; border-right: 2px solid #d0d0d0; border-top: 1px solid #d0d0d0; }
.ptabs { display: flex; height: 32px; font-size: 16px; }
.ptabs button { flex: 1; display: flex; align-items: center; justify-content: space-between; padding: 0 9px 1px 16px; background: #fafafa; border: solid #d0d0d0; border-width: 0 0 1px 1px; }
.ptabs .on { flex: 0 0 96px; padding: 0 0 2px 23px; background: #fff; border: 0; font-weight: 600; color: #111; }
.sources { padding: 5px 13px 7px 14px; border-bottom: 1px solid #ddd; color: #444; }
.sources li { display: flex; align-items: center; gap: 8px; height: 25px; padding-left: 11px; white-space: nowrap; }
.sources .sel { background: #e5e5e5; }
.sources svg { width: 20px; height: 20px; }
.find { display: flex; align-items: center; padding: 11px 0 8px 10px; color: #555; }
.search { display: flex; align-items: center; width: 162px; height: 29px; border: 1px solid #c6c6c6; padding: 0 6px 0 8px; }
.search input { width: 100%; min-width: 0; outline: 0; }
::placeholder { color: #999; opacity: 1; }
.find > button { margin-left: 5px; }
.find .view { margin-left: 7px; padding: 4px 5px 4px 8px; border-left: 1px solid #d0d0d0; }
.pane h2 { font-size: 16px; line-height: 24px; font-weight: 600; color: #111; padding-left: 22px; }
.find + h2 { padding-bottom: 4px; line-height: 25px; }
.scroller { flex: 1 1 0; display: flex; min-height: 0; overflow: hidden; }
.lists { flex: 1; height: 0; }
.fields { display: grid; grid-auto-rows: 26px; }
.fields li { display: flex; align-items: center; padding-left: 58px; white-space: nowrap; color: #222; }
.dims { height: 237px; grid-template-rows: repeat(9, 1fr); grid-auto-rows: 1px; margin: 0 8px 2px 0; }
.dims::after { content: ""; background: #d5d5d5; margin-left: 19px; }
.measures { height: 367px; grid-auto-rows: 1fr; }
.fields svg { width: 14px; height: 14px; margin: 0 15px 0 -29px; color: #45a27c; }
.fields .bins { width: 18px; height: 12px; margin: 2px 13px 0 -31px; }
.fields .globe { width: 16px; height: 16px; margin: 0 15px 0 -31px; }
.fields .dim svg, .fields b { color: #3b83a6; }
.fields b { width: 32px; margin-left: -32px; font-size: 11px; font-weight: 500; }
.vtrack { width: 20px; background: #efefef; padding: 22px 7px; }
.vthumb { height: 279px; width: 6px; background: #858585; }
.params { border-top: 1px solid #d5d5d5; margin-top: 2px; padding: 2px 0 1px; }
.params h2 { margin-bottom: 5px; }

.cards { width: 193px; flex: none; display: flex; flex-direction: column; gap: 8px; }
.card { border: 1px solid #d2d2d2; border-right-width: 2px; background: #fafafa; padding: 0 5px; }
.card h3 { font-size: 15px; font-weight: 300; line-height: 36px; padding-left: 3px; color: #333; }
.pages { height: 77px; }
.filters { height: 97px; }
.marks { height: 258px; padding: 0 8px; }
.marks h3 { padding: 0; margin-bottom: 8px; }
.pill { display: block; height: 25px; border-radius: 13px; color: #fff; text-align: left; padding: 0 13px 1px; font-weight: 500; width: 100%; }
.filters .pill { margin-top: 4px; }
.blue { background: #4996b2; }
.green { background: #00b180; }
.marktype { display: flex; align-items: center; height: 26px; border: 1px solid #d2d2d2; padding-left: 15px; }
.marktype select { flex: 1; height: 24px; padding-left: 8px; appearance: none; color: #444;
  background: linear-gradient(45deg, transparent 50%, #555 50%) right 11px center / 5px 5px no-repeat, linear-gradient(315deg, transparent 50%, #555 50%) right 6px center / 5px 5px no-repeat, linear-gradient(#e2e2e2, #e2e2e2) right 22px center / 1px 100% no-repeat; }
.markgrid { display: grid; grid-template-columns: repeat(3, 1fr); gap: 7px; margin-top: 7px; }
.markgrid button { height: 53px; border: 1px solid #cfcfcf; display: flex; flex-direction: column; align-items: center; padding-top: 7px; font-size: 14px; gap: 3px; color: #222; }
.markgrid button:disabled { color: #999; }
.markgrid svg { width: 20px; height: 20px; }

.stage { flex: 1; min-width: 0; display: flex; flex-direction: column; }
.shelf { display: flex; align-items: center; gap: 3px; height: 35px; margin-bottom: 7px; border: 1px solid #d2d2d2; border-right-width: 2px; background: #fafafa; }
.shelf + .shelf { margin-bottom: 8px; }
.shelf .lab { width: 156px; height: 33px; display: flex; align-items: center; gap: 9px; padding-left: 8px; border-right: 1px solid #d2d2d2; color: #444; }
.shelf .pill { width: 185px; }
.viz { flex: 1; display: flex; flex-direction: column; margin-bottom: 8px; background: #fff; border: 1px solid #d2d2d2; border-right-width: 2px; padding-bottom: 6px; }
.viz h2 { font: 700 31px/40px Lato, "Open Sans", sans-serif; color: #f28e2b; text-align: center; padding: 8px 0 10px; }
.chart {
  flex: 1; display: grid; padding-right: 6px;
  grid-template-columns: 45px 49px 1fr;
  grid-template-rows: 51px 1fr 206px 21px;
}
.colhead { grid-column: 3; text-align: center; font: 600 14px/78px "Open Sans", sans-serif; color: #555; }
.ytitle { grid-column: 1; writing-mode: vertical-rl; transform: rotate(180deg); text-align: center; padding-right: 19px; color: #555; font: 600 14px/26px "Open Sans", sans-serif; }
.ticks, .plot { display: grid; grid-template-rows: 79fr 84fr 83fr 84fr 83fr; }
.ticks { text-align: right; padding-right: 8px; color: #666; }
.ticks span { margin-top: -9px; }
.ticks span:last-child { margin-top: -19px; height: 0; }
.ticks span:first-child { margin: 0; }
.plot { position: relative; overflow: hidden; border-left: 1px solid #ececec; border-bottom: 1px solid #ececec; margin-right: 4px; }
.plot div + div { border-top: 1px solid #f0f0f0; }
.area { position: absolute; left: 0; bottom: 0; }
.names { grid-column: 3; display: flex; overflow: hidden; margin-right: 4px; color: #555; min-width: 0; padding-top: 6px;
  background: repeating-linear-gradient(90deg, #ececec 0 1px, transparent 1px 25px) 0 2px / 100% 3px no-repeat; }
.names span { writing-mode: vertical-rl; transform: rotate(180deg); flex: 0 0 25px; line-height: 25px; text-align: right; white-space: nowrap; }
.htrack { grid-column: 3; background: #efefef; padding: 7px 21px; }
.hthumb { width: 433px; height: 7px; background: #858585; }

.sheets { display: flex; height: 37px; background: #e6e6e6; border-bottom: 1px solid #cfcfcf; color: #555; }
.sheets button { flex: 0 0 71px; border-right: 1px solid #c8c8c8; display: flex; align-items: center; padding-left: 7px; gap: 5px; white-space: nowrap; overflow: hidden; font-size: 15px; padding-top: 1px; }
.sheets svg { width: 14px; height: 14px; }
.sheets .src { flex-basis: 164px; padding-left: 11px; }
.sheets .src svg { height: 16px; }
.sheets .red { flex-basis: 69px; border-bottom: 4px solid #f86073; padding-top: 5px; }
.sheets .cur { background: #fafafa; font-weight: 600; padding-top: 0; }
.sheets .w2 { flex-basis: 77px; }
.sheets .dash { flex-basis: 129px; padding-left: 11px; }
.sheets .story { flex-basis: 91px; padding-left: 10px; }
.sheets .cut { flex: 1 1 0; min-width: 0; }
.sheets .add { flex-basis: 40px; padding-left: 11px; }
.sheets .add svg { width: 20px; height: 20px; margin-top: 4px; }

.status { display: flex; align-items: center; height: 26px; background: #eaeaea; gap: 22px; padding-left: 4px; font: 400 14px/20px Roboto, sans-serif; color: #222; }
.status > div { display: flex; align-items: center; height: 26px; border-left: 1px solid #cfcfcf; margin-left: -22px; }
.status > .user { margin-left: auto; width: 158px; padding: 0 9px 0 6px; }
.user span { margin: 0 auto 0 12px; }
.blank { width: 34px; }
.status > .wide { width: 59px; }
.nav { width: 88px; gap: 10px; padding-left: 8px; }
.modes { width: 85px; padding-left: 11px; gap: 12px; }

.taskbar { display: grid; grid-template-columns: 1fr auto 1fr; align-items: center; height: 60px; color: #fff; font: 400 15px/20px "Open Sans", sans-serif;
  background: linear-gradient(90deg, #1c222c 0, #1b222e 17%, #112250 21%, #101f5e 32%, #12205a 46%, #1b2040 56%, #1a2040 60%, #10205c 67%, #1d2036 73%, #1b222c 78%); }
.weather { display: flex; gap: 8px; padding-left: 27px; font-size: 14px; align-items: center; }
.weather span { color: #ccc; }
.apps { display: flex; align-items: center; padding-left: 7px; }
.apps button { width: 55px; height: 60px; display: flex; flex-direction: column; align-items: center; justify-content: center; position: relative; }
.apps .start { width: 30px; margin-right: 16px; }
.tsearch { display: flex; align-items: center; width: 274px; height: 40px; border-radius: 20px; background: #ffffff22; padding: 0 8px 0 15px; gap: 13px; margin-right: 3px; }
.tsearch input { flex: 1; min-width: 0; font-size: 16px; outline: 0; }
.tsearch ::placeholder { color: #dde0ea; }
.run::after, .active::after { content: ""; position: absolute; bottom: 6px; width: 8px; height: 4px; border-radius: 2px; background: #9aa0b4; }
.apps .active { width: 46px; height: 50px; margin-left: 4px; border: 1px solid #ffffff1c; border-radius: 5px; background: #ffffff14; }
.active::after { bottom: 0; width: 20px; background: #4cc2ff; }
.tray { display: flex; align-items: center; justify-content: flex-end; padding-right: 24px; gap: 10px; font-size: 14px; }
.sync { margin-left: 12px; }
.lang { text-align: center; margin: 0 13px; }
.clock { text-align: right; margin-left: 10px; font-size: 15px; }
```
